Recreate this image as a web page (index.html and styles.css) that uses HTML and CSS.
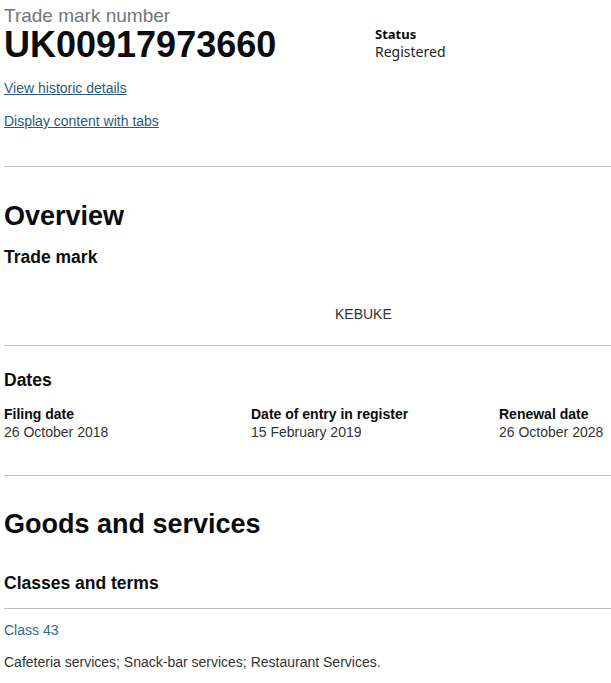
FILE: index.html
```html
<!DOCTYPE html>
<html lang="en">
<head>
  <meta charset="UTF-8">
  <meta name="viewport" content="width=device-width, initial-scale=1.0">
  <title>UK00917973660</title>
  <link rel="stylesheet" href="styles.css">
</head>
<body>

<div class="page">
  <!-- Шапка с номера и статуса -->
  <div class="header">
    <div class="header-main">
      <span class="caption">Trade mark number</span>
      <h1>UK00917973660</h1>
    </div>
    <div class="status">
      <span class="status-label">Status</span>
      <span class="status-value">Registered</span>
    </div>
  </div>

  <div class="links">
    <a href="#">View historic details</a>
    <a href="#">Display content with tabs</a>
  </div>

  <hr class="first">

  <h2 class="overview">Overview</h2>
  <h3>Trade mark</h3>
  <div class="mark-text">KEBUKE</div>

  <hr>

  <h3 class="dates-title">Dates</h3>
  <div class="dates">
    <div>
      <span class="date-label">Filing date</span>
      <span class="date-value">26 October 2018</span>
    </div>
    <div>
      <span class="date-label">Date of entry in register</span>
      <span class="date-value">15 February 2019</span>
    </div>
    <div>
      <span class="date-label">Renewal date</span>
      <span class="date-value">26 October 2028</span>
    </div>
  </div>

  <hr>

  <h2 class="goods">Goods and services</h2>
  <h3 class="classes-title">Classes and terms</h3>
  <hr class="thin">
  <a class="class-link" href="#">Class 43</a>
  <p class="terms">Cafeteria services; Snack-bar services; Restaurant Services.</p>
</div>

</body>
</html>
```

FILE: styles.css
```css
body {
  margin: 0;
  font-family: "Liberation Sans", Arial, sans-serif;
  color: #0b0c0c;
  background-color: #fff;
  overflow-x: hidden;
}

.page {
  padding: 5px 0 0 4px;
}

.header {
  display: flex;
}

.header-main {
  width: 371px;
}

.caption {
  display: block;
  padding-top: 1px;
  font-size: 19px;
  line-height: 20px;
  color: #6f777b;
}

h1 {
  margin: -1px 0 0;
  font-size: 36px;
  line-height: 40px;
  font-weight: bold;
}

.status {
  display: flex;
  flex-direction: column;
  padding-top: 21px;
  font-family: "Noto Sans", "Open Sans", sans-serif;
  font-size: 13px;
  line-height: 17px;
  color: #0b0c0c;
}

.status-label {
  font-weight: bold;
}

.status-value {
  font-size: 14px;
  color: #222;
}

.links {
  display: flex;
  flex-direction: column;
  gap: 13px;
  margin-top: 13px;
}

.links a {
  font-size: 14px;
  line-height: 20px;
  color: #2b5b78;
  align-self: flex-start;
}

hr {
  border: none;
  border-top: 1px solid #bfc1c3;
  margin: 0;
}

hr.first {
  margin-top: 35px;
}

h2 {
  margin: 0;
  font-size: 27px;
  line-height: 32px;
  font-weight: bold;
}

h3 {
  margin: 0;
  font-size: 17.5px;
  line-height: 24px;
  font-weight: bold;
}

.overview {
  margin-top: 33px;
}

.overview + h3 {
  margin-top: 13px;
}

.mark-text {
  padding-left: 331px;
  margin-top: 35px;
  margin-bottom: 21px;
  font-size: 14px;
  line-height: 20px;
  color: #333;
}

.dates-title {
  margin-top: 22px;
}

.dates {
  display: grid;
  grid-template-columns: 247px 248px 1fr;
  margin-top: 13px;
  margin-bottom: 34px;
  font-size: 14px;
  line-height: 18px;
}

.dates div {
  display: flex;
  flex-direction: column;
  white-space: nowrap;
}

.date-label {
  font-weight: bold;
}

.date-value {
  color: #333;
}

.goods {
  margin-top: 32px;
}

.classes-title {
  margin-top: 31px;
  margin-bottom: 13px;
}

.class-link {
  display: inline-block;
  margin-top: 11px;
  font-size: 14px;
  line-height: 20px;
  color: #2e6a86;
  text-decoration: none;
}

.terms {
  margin: 12px 0 0;
  font-size: 14px;
  line-height: 20px;
  color: #333;
}
```
